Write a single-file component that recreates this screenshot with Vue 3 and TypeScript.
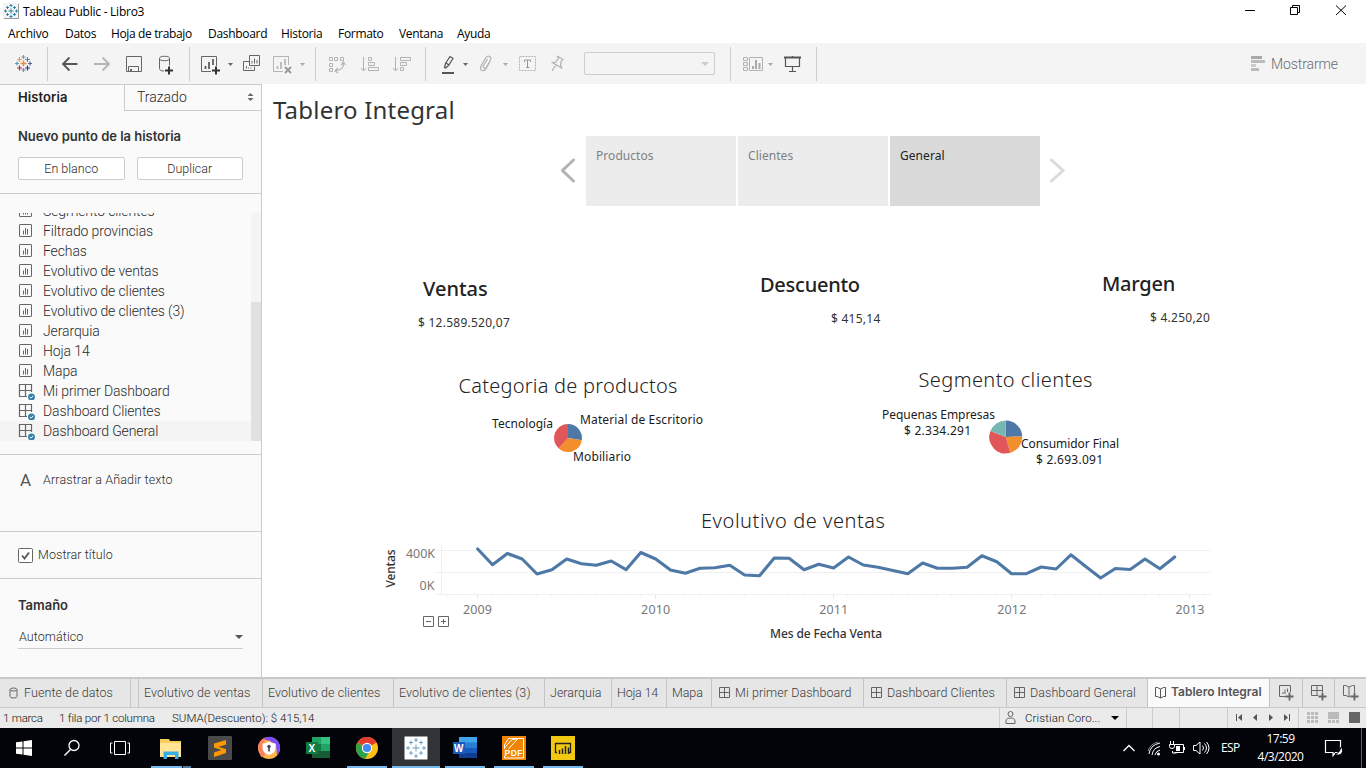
<script setup lang="ts">
interface Sheet { name: string; kind: 'sheet' | 'dashboard'; selected?: boolean }
interface Tab { name: string; cls: string; icon?: 'dash' | 'story' }
interface Slice { from: number; to: number; color: string }

const menus = ['Archivo', 'Datos', 'Hoja de trabajo', 'Dashboard', 'Historia', 'Formato', 'Ventana', 'Ayuda']

const sheets: Sheet[] = [
  { name: 'Segmento clientes', kind: 'sheet' },
  { name: 'Filtrado provincias', kind: 'sheet' },
  { name: 'Fechas', kind: 'sheet' },
  { name: 'Evolutivo de ventas', kind: 'sheet' },
  { name: 'Evolutivo de clientes', kind: 'sheet' },
  { name: 'Evolutivo de clientes (3)', kind: 'sheet' },
  { name: 'Jerarquia', kind: 'sheet' },
  { name: 'Hoja 14', kind: 'sheet' },
  { name: 'Mapa', kind: 'sheet' },
  { name: 'Mi primer Dashboard', kind: 'dashboard' },
  { name: 'Dashboard Clientes', kind: 'dashboard' },
  { name: 'Dashboard General', kind: 'dashboard', selected: true },
]

const storyPoints = ['Productos', 'Clientes', 'General']

const tabs: Tab[] = [
  { name: 'Evolutivo de ventas', cls: 'w1' },
  { name: 'Evolutivo de clientes', cls: 'w2' },
  { name: 'Evolutivo de clientes (3)', cls: 'w3' },
  { name: 'Jerarquia', cls: 'w4' },
  { name: 'Hoja 14', cls: 'w5' },
  { name: 'Mapa', cls: 'w6' },
  { name: 'Mi primer Dashboard', cls: 'w7', icon: 'dash' },
  { name: 'Dashboard Clientes', cls: 'w8', icon: 'dash' },
  { name: 'Dashboard General', cls: 'w9', icon: 'dash' },
  { name: 'Tablero Integral', cls: 'w10 active', icon: 'story' },
]

const monthX = (i: number) => 477.7 + i * 14.83
const monthly = [
  549, 564.7, 553.5, 559, 574, 569.7, 559, 563.7, 565.3, 561, 569.7, 552.5,
  559, 570, 573.3, 568.3, 567.7, 565.3, 575, 575.7, 558, 558.2, 569.7, 564.3,
  568, 557, 565, 567.3, 570.5, 573.7, 563, 568.3, 568.3, 567.3, 555.7, 561.7,
  573.7, 573.7, 567, 569, 554.8, 566.5, 578, 568.5, 569.5, 559, 568.7, 557,
]
const salesLine = monthly.map((y, i) => `${monthX(i).toFixed(1)},${y}`).join(' ')
const ticks = Array.from({ length: 52 }, (_, i) => ({ x: Math.round(monthX(i - 2)) - 0.5, major: (i - 2) % 12 === 0 }))
const years = [2009, 2010, 2011, 2012, 2013]

const categories: Slice[] = [
  { from: 0, to: 99, color: '#4e79a7' },
  { from: 99, to: 221, color: '#f28e2b' },
  { from: 221, to: 360, color: '#e15759' },
]
const segments: Slice[] = [
  { from: 0, to: 88, color: '#4e79a7' },
  { from: 88, to: 164, color: '#f28e2b' },
  { from: 164, to: 291, color: '#e15759' },
  { from: 291, to: 360, color: '#76b7b2' },
]
function slicePath(s: Slice, cx: number, cy: number, r: number): string {
  const at = (deg: number) => {
    const a = (deg * Math.PI) / 180
    return `${(cx + r * Math.sin(a)).toFixed(2)} ${(cy - r * Math.cos(a)).toFixed(2)}`
  }
  return `M${cx} ${cy}L${at(s.from)}A${r} ${r} 0 ${s.to - s.from > 180 ? 1 : 0} 1 ${at(s.to)}Z`
}
</script>

<template>
  <div class="window">
    <header class="titlebar">
      <svg class="applogo" width="16" height="16" viewBox="0 0 16 16">
        <rect width="16" height="16" fill="#f4f4f4" />
        <path d="M15.500 1v14.500H1" fill="none" stroke="#999" />
        <path d="M8 5.500v5M5.500 8h5M8 1v3M6.500 2.500h3M8 12v3M6.500 13.500h3M1 8h3M2.500 6.500v3M12 8h3M13.500 6.500v3M4.500 3v3M3 4.500h3M11.500 3v3M10 4.500h3M4.500 10v3M3 11.500h3M11.500 10v3M10 11.500h3" stroke="#2e86ab" fill="none" />
      </svg>
      <span class="apptitle">Tableau Public - Libro3</span>
      <svg class="controls" width="136" height="22" viewBox="1230 0 136 22" fill="none" stroke="#000">
        <path d="M1245 10.500h10" />
        <path d="M1290.500 7.500h7v7h-7zM1292.500 7.500v-2h7v7h-2" />
        <path d="M1336 5.500l10 9.500M1346 5.500l-10 9.500" />
      </svg>
    </header>

    <nav class="menubar">
      <span v-for="(m, i) in menus" :key="m" :class="'m' + i">{{ m }}</span>
    </nav>

    <div class="toolbar">
      <svg width="48" height="41" viewBox="0 43 48 41" fill="none" stroke-width="1.200">
        <path d="M23.500 60.500v6M20.500 63.500h6" stroke="#eb8b3c" stroke-width="1.500" />
        <path d="M23.500 55v4M21.500 57h4" stroke="#7199a6" />
        <path d="M23.500 68v4M21.500 70h4" stroke="#7b86b5" />
        <path d="M17 61.500v4M15 63.500h4" stroke="#5c9ca8" />
        <path d="M30 61.500v4M28 63.500h4" stroke="#5b6591" />
        <path d="M19.500 57v5M17 59.500h5" stroke="#e8a04d" />
        <path d="M27.500 57v5M25 59.500h5" stroke="#5b879b" />
        <path d="M19.500 65.500v5M17 68h5" stroke="#c72035" />
        <path d="M27.500 65.500v5M25 68h5" stroke="#1f4683" />
        <path d="M47.500 47v34" stroke="#ccc" stroke-width="1" />
      </svg>
      <svg width="142" height="41" viewBox="48 43 142 41" fill="none">
        <path d="M77.500 64H63M69.500 57.500L63 64l6.500 6.500" stroke="#555" stroke-width="1.800" />
        <path d="M94 64h15M102.500 57.500L109 64l-6.500 6.500" stroke="#b5b5b5" stroke-width="1.800" />
        <path d="M126.500 56.500h15v15h-15zM128.500 71v-4.500h10v4.500" stroke="#666" />
        <path d="M130 69h2v3h-2z" fill="#666" />
        <ellipse cx="164.500" cy="58.500" rx="5" ry="2.200" stroke="#666" />
        <path d="M159.500 58.500v10q0 2.500 4.500 2.500M169.500 58.500v7" stroke="#666" />
        <path d="M165 70.500h8M169 66.500v8" stroke="#333" stroke-width="2" />
        <path d="M189.500 47v34" stroke="#ccc" />
      </svg>
      <svg width="126" height="41" viewBox="190 43 126 41" fill="none">
        <path d="M211 71.500h-9.500v-15h15V66" stroke="#666" />
        <path d="M205.500 66v3M209 62v7M213 59v6" stroke="#555" stroke-width="1.700" />
        <path d="M212 70.500h8M216 66.500v8" stroke="#333" stroke-width="2" />
        <path d="M228 63h5l-2.500 3z" fill="#666" />
        <path d="M249.500 55.500h10v10h-10z" stroke="#666" />
        <path d="M249 61.500h-5.500v9h11v-4" stroke="#666" />
        <path d="M252 61v2.500M254.500 58.500v5M257 60v3.500M246.500 66v2.500M248.500 67.500v1M251 67.500v1" stroke="#666" />
        <path d="M283 71.500h-9.500v-15h15V65" stroke="#b5b5b5" />
        <path d="M277.500 66v3M281 62v7M285 59v6" stroke="#b5b5b5" stroke-width="1.700" />
        <path d="M285 67l6 6M291 67l-6 6" stroke="#999" stroke-width="1.800" />
        <path d="M300 63h5l-2.500 3z" fill="#aaa" />
        <path d="M315.500 47v34" stroke="#ccc" />
      </svg>
      <svg width="110" height="41" viewBox="316 43 110 41" fill="none" stroke="#b3b3b3">
        <path d="M329.500 57.500h3v3h-3zM334.500 57.500h3v3h-3zM340.500 57.500h3v3h-3zM329.500 63.500h3v3h-3zM329.500 68.500h3v3h-3z" />
        <path d="M343.500 62.500q1 7.500-8.500 8.500M341 65l2.500-3 2 3M338 68l-3 3 3 2" stroke-width="1.200" />
        <path d="M363.500 57v14M361 68l2.500 3 2.500-3M368.500 57.500h3v3h-3zM368.500 62.500h6v3h-6zM368.500 67.500h10v3h-10z" />
        <path d="M395.500 57v14M393 68l2.500 3 2.500-3M400.500 57.500h10v3h-10zM400.500 62.500h6v3h-6zM400.500 67.500h3v3h-3z" />
        <path d="M425.500 47v34" stroke="#ccc" />
      </svg>
      <svg width="150" height="41" viewBox="426 43 150 41" fill="none">
        <path d="M444.500 67.500l1-4 4.500-7 3 2-4.500 7-3 2.500zM446 63l3 2" stroke="#555" stroke-width="1.200" />
        <path d="M442 73h12" stroke="#555" stroke-width="2" />
        <path d="M463 63h5l-2.500 3z" fill="#666" />
        <path d="M487.500 59l-4 6.500q-1 2 .5 2.500t2.500-1l4-7q1-2.500-1-3.500t-3.500 1l-5 8.500q-1.500 3.500 1 4.500 2 .7 3.500-1l4-7" stroke="#b3b3b3" stroke-width="1.200" />
        <path d="M503 63h5l-2.500 3z" fill="#aaa" />
        <path d="M519.500 56.500h16v14h-16z" stroke="#b3b3b3" stroke-dasharray="2 1" />
        <path d="M524.500 62v-2h6v2M527.500 60v7M526 67.500h3.500" stroke="#999" />
        <path d="M557 56l6 3.500-1.500 1-1 4 1 3.500-9-5.500 3.500-.5 2.500-4zM555.500 65.500l-3.500 5.500" stroke="#b0b0b0" stroke-width="1.200" />
      </svg>
      <div class="fitbox"><i></i></div>
      <svg width="102" height="41" viewBox="715 43 102 41" fill="none">
        <path d="M730.500 47v34M816.500 47v34" stroke="#ccc" />
        <path d="M743.500 57.500h4v3h-4zM743.500 62.500h4v3h-4zM743.500 67.500h4v3h-4zM749.500 57.500h13v13h-13z" stroke="#b3b3b3" />
        <path d="M753 66v3M756 60v9M759.500 63v6" stroke="#aaa" stroke-width="2" />
        <path d="M768 63h5l-2.500 3z" fill="#aaa" />
        <path d="M784 57.500h17" stroke="#555" stroke-width="2" />
        <path d="M785.500 58v8.500h14V58M792.500 66.500v5M789 71.500h7M792.500 56v1" stroke="#555" stroke-width="1.200" />
      </svg>
      <div class="showme">
        <svg width="14" height="16" viewBox="0 0 14 16"><path d="M0 0h11v3H0z" fill="#a9a9a9" /><path d="M0 4h14v3H0zM0 12h8v3H0z" fill="#bbb" /><path d="M0 8h5v3H0z" fill="#ccc" /></svg>
        <span>Mostrarme</span>
      </div>
    </div>

    <div class="workspace">
      <aside class="sidebar">
        <div class="panetabs">
          <b>Historia</b>
          <div class="layouttab"><span>Trazado</span>
            <svg width="7" height="8" viewBox="0 0 7 8"><path d="M.5 3h6l-3-3zM.5 5h6l-3 3z" fill="#666" /></svg>
          </div>
        </div>
        <section class="newpoint">
          <h4>Nuevo punto de la historia</h4>
          <div class="buttons"><button>En blanco</button><button>Duplicar</button></div>
        </section>
        <section class="sheetbox">
          <div class="clip">
            <ul>
              <li v-for="s in sheets" :key="s.name" :class="{ selected: s.selected }">
                <svg width="18" height="18" viewBox="0 0 18 18" fill="none" stroke="#666">
                  <template v-if="s.kind === 'sheet'">
                    <rect x="1.500" y="2.500" width="12" height="12" rx=".5" />
                    <path d="M5.500 8.500v4M7.500 6v6.500M9.500 7v5.500" />
                  </template>
                  <template v-else>
                    <path d="M9 14.500H1.500v-12h12V10M7.500 2.500v12M1.500 8.500h12" stroke-width="1.200" />
                    <circle cx="13.500" cy="15" r="3.500" fill="#3581a8" stroke="none" />
                    <path d="M11.800 15l1.200 1.200 2.200-2.400" stroke="#fff" />
                  </template>
                </svg>
                <span>{{ s.name }}</span>
              </li>
            </ul>
            <div class="scroll"><div class="thumb"></div></div>
          </div>
        </section>
        <section class="addtext"><i>A</i><span>Arrastrar a Añadir texto</span></section>
        <section class="showtitle">
          <svg width="15" height="15" viewBox="0 0 15 15" fill="none"><rect x=".5" y=".5" width="14" height="14" rx="1" fill="#fff" stroke="#666" /><path d="M4 7.500l2.500 3L11 4.500" stroke="#555" stroke-width="1.800" /></svg>
          <span>Mostrar título</span>
        </section>
        <section class="size">
          <h4>Tamaño</h4>
          <div class="select"><span>Automático</span><i></i></div>
        </section>
      </aside>

      <main class="canvas">
        <h1>Tablero Integral</h1>
        <div class="story">
          <svg width="25" height="70" viewBox="561 136 25 70"><path d="M573.500 160l-11 10.500 11 10.500" fill="none" stroke="#b4b4b4" stroke-width="3" stroke-linecap="round" /></svg>
          <div v-for="(p, i) in storyPoints" :key="p" class="point" :class="{ current: i === 2 }">{{ p }}</div>
          <svg width="25" height="70" viewBox="1040 136 25 70"><path d="M1051.500 160l11.500 10.500-11.500 10.500" fill="none" stroke="#dadada" stroke-width="3" stroke-linecap="round" /></svg>
        </div>

        <div class="kpis">
          <div class="kpi k1"><h2>Ventas</h2><p>$ 12.589.520,07</p></div>
          <div class="kpi k2"><h2>Descuento</h2><p>$ 415,14</p></div>
          <div class="kpi k3"><h2>Margen</h2><p>$ 4.250,20</p></div>
        </div>

        <div class="pies">
          <svg width="470" height="130" viewBox="380 360 470 130">
            <text class="vt" x="458.500" y="393" textLength="219">Categoria de productos</text>
            <path v-for="s in categories" :key="s.from" :d="slicePath(s, 568, 438, 14)" :fill="s.color" />
            <text x="492" y="428" textLength="61">Tecnología</text>
            <text x="580" y="424" textLength="123">Material de Escritorio</text>
            <text x="573" y="461" textLength="58">Mobiliario</text>
          </svg>
          <svg width="370" height="130" viewBox="850 360 370 130">
            <text class="vt" x="918.500" y="387" textLength="174">Segmento clientes</text>
            <path v-for="s in segments" :key="s.from" :d="slicePath(s, 1005.8, 437, 16.5)" :fill="s.color" />
            <text x="882" y="419" textLength="113">Pequenas Empresas</text>
            <text x="904" y="435" textLength="67">$ 2.334.291</text>
            <text x="1021" y="448" textLength="98">Consumidor Final</text>
            <text x="1036" y="464" textLength="67">$ 2.693.091</text>
          </svg>
        </div>

        <svg class="trend" width="840" height="150" viewBox="380 500 840 150">
          <text class="vt" x="701" y="528" textLength="184">Evolutivo de ventas</text>
          <path d="M436 550.500h775M436 572.500h775M436 594.500h775M441.500 545v50" stroke="#f0f0f0" fill="none" />
          <path v-for="t in ticks" :key="t.x" :d="`M${t.x} 595v${t.major ? 4 : 1}`" stroke="#e8e8e8" />
          <polyline :points="salesLine" fill="none" stroke="#4e79a7" stroke-width="3.100" stroke-linejoin="round" stroke-linecap="round" />
          <g class="axis">
            <text x="406" y="558" textLength="29">400K</text>
            <text x="419.500" y="590" textLength="15">0K</text>
            <text v-for="(y, i) in years" :key="y" :x="463 + i * 178.1" y="614" textLength="29">{{ y }}</text>
          </g>
          <text class="at" transform="translate(395 587.500) rotate(-90)" textLength="38">Ventas</text>
          <text class="at" x="770" y="638" textLength="112">Mes de Fecha Venta</text>
          <path d="M423.500 616.500h10v10h-10zM438.500 616.500h10v10h-10zM426 621.500h5M441 621.500h5M443.500 619v5" fill="none" stroke="#666" />
        </svg>
      </main>
    </div>

    <div class="tabs">
      <div class="tab source">
        <svg width="10" height="13" viewBox="0 0 10 13" fill="none" stroke="#666"><ellipse cx="4.500" cy="2.500" rx="3.500" ry="1.500" /><path d="M1 2.500v7q0 1.500 3.500 1.500t3.500-1.500v-7" /></svg>
        <span>Fuente de datos</span>
      </div>
      <div class="tab gap"></div>
      <div v-for="t in tabs" :key="t.name" class="tab" :class="t.cls">
        <svg v-if="t.icon === 'dash'" width="12" height="13" viewBox="0 0 12 13" fill="none" stroke="#666"><path d="M.5 .5h10v10H.5zM5.500 .5v10M.5 5.500h10" /></svg>
        <svg v-if="t.icon === 'story'" width="12" height="15" viewBox="0 0 12 15" fill="none" stroke="#555"><path d="M.5 1.500h2L5.500 3l3-1.500h2v9h-2l-3 1.500-3-1.500h-2zM5.500 3v9" /></svg>
        <span>{{ t.name }}</span>
      </div>
      <div class="tab new n1"><svg width="18" height="18" viewBox="0 0 18 18" fill="none" stroke="#666"><path d="M8 12.500H1.500v-11h11V8M5 8v2M7 5.500V10M9.500 4.500V8" /><path d="M7.500 12.500h8M11.500 8.500v8" stroke-width="1.800" /></svg></div>
      <div class="tab new n2"><svg width="18" height="18" viewBox="0 0 18 18" fill="none" stroke="#666"><path d="M8 11.500H1.500v-10h11V8M7 1.500v10M1.500 6.500h11" /><path d="M8.500 12.500h8M12.500 8.500v8" stroke-width="1.800" /></svg></div>
      <div class="tab new n3"><svg width="18" height="18" viewBox="0 0 18 18" fill="none" stroke="#666"><path d="M8.500 12l-1.500 1-3-1.500H1.500v-10h2L7 3l3.500-1.500h2V8M7 3v10" /><path d="M8.500 12.500h8M12.500 8.500v8" stroke-width="1.800" /></svg></div>
    </div>

    <div class="status">
      <span class="s1">1 marca</span><span class="s2">1 fila por 1 columna</span><span class="s3">SUMA(Descuento): $ 415,14</span>
      <div class="user">
        <svg width="11" height="14" viewBox="0 0 11 14" fill="none" stroke="#666"><circle cx="5.500" cy="3" r="2.500" /><path d="M1 12.500V10q0-3 4.500-3t4.500 3v2.500z" /></svg>
        <span>Cristian Coro...</span>
        <i></i>
      </div>
      <div class="cell c1"></div><div class="cell c2"></div><div class="cell c3"></div>
      <svg width="139" height="20" viewBox="1227 708 139 20">
        <path d="M1227.500 708v20M1298.500 708v20" stroke="#ccc" />
        <path d="M1236 714h1v7h-1zM1242 714v7l-4-3.500zM1257 714v7l-4-3.500zM1269 714v7l4-3.500zM1284 714v7l4-3.500zM1289 714h1v7h-1z" fill="#555" />
        <path d="M1307 712h3v3h-3zM1311 712h3v3h-3zM1315 712h3v3h-3zM1307 716h3v3h-3zM1311 716h3v3h-3zM1315 716h3v3h-3zM1307 720h3v3h-3zM1311 720h3v3h-3zM1315 720h3v3h-3zM1328 712h11v7h-11zM1328 720h3v3h-3zM1332 720h3v3h-3zM1336 720h3v3h-3z" fill="#bbb" />
        <path d="M1349 712h11v11h-11z" fill="#666" />
      </svg>
    </div>

    <footer class="taskbar">
      <svg width="147" height="40" viewBox="0 728 147 40" fill="none" stroke="#fff">
        <path d="M16 742.300l6.500-.9v6.100H16zM23.500 741.200l8.500-1.200v7.500h-8.500zM16 748.500h6.500v6.100l-6.500-.9zM23.500 748.500H32v7.500l-8.500-1.200z" fill="#fff" stroke="none" />
        <circle cx="74" cy="745.500" r="5" stroke-width="1.300" /><path d="M70.500 749.500l-6 6" stroke-width="1.400" />
        <path d="M114.500 741.500h11v13h-11zM112.500 743h-2v10h2M127.500 743h2v10h-2" />
      </svg>
      <svg width="49" height="40" viewBox="147 728 49 40">
        <path d="M160 739h9l1 2h11v16h-21z" fill="#f5cf5c" /><path d="M160 743h21v14h-21z" fill="#ffe594" /><path d="M163.500 759v-7.500h15v7.500H175v-4h-8v4z" fill="#36aee6" />
        <path d="M151 766h31v2h-31z" fill="#76b9ed" /><path d="M183 766h8v2h-8z" fill="#4f7ba0" />
      </svg>
      <svg width="49" height="40" viewBox="196 728 49 40">
        <rect x="208" y="736" width="24" height="24" rx="1" fill="#4a4a4a" />
        <path d="M214 743.500l12-3.500v4.500l-7.500 2.500 7.500 2v4l-12 4V752.500l7.500-2.500-7.500-2.500z" fill="#ff9800" />
      </svg>
      <svg width="49" height="40" viewBox="245 728 49 40">
        <circle cx="269" cy="748" r="11" fill="#ffb547" /><path d="M262 739.500a11 11 0 0 1 18 8.500 11 11 0 0 1-3 7.500l-1-11-7-4z" fill="#7b4dff" /><path d="M258 748a11 11 0 0 1 7-10l-1 8 1 10-4 1z" fill="#ff7f5c" />
        <path d="M262.500 743.500q4 0 6.500-2 2.500 2 6.500 2v4.500q0 5-6.500 7-6.500-2-6.500-7z" fill="#fff" /><circle cx="269" cy="746.500" r="1.700" fill="#44405e" /><path d="M268.200 747h1.600v4.500h-1.600z" fill="#44405e" />
      </svg>
      <svg width="49" height="40" viewBox="294 728 49 40">
        <path d="M312 737h18v21h-18z" fill="#21a366" /><path d="M321 737h9v7h-9z" fill="#33c481" /><path d="M312 744h9v7h-9z" fill="#107c41" /><path d="M312 751h18v7h-18z" fill="#185c37" />
        <path d="M306 742h12v12h-12z" fill="#107c41" /><text class="tile" x="308.500" y="752">X</text>
      </svg>
      <svg width="49" height="40" viewBox="343 728 49 40">
        <circle cx="367" cy="748" r="11" fill="#fbc116" /><path d="M367 748l-9.500-5.500a11 11 0 0 1 19 0z" fill="#e33b2e" /><path d="M357.500 742.500a11 11 0 0 0 7.500 16.300l5-8z" fill="#2ba24c" />
        <circle cx="367" cy="748" r="5.200" fill="#fff" /><circle cx="367" cy="748" r="4.100" fill="#4688f1" />
        <path d="M347 766h40v2h-40z" fill="#76b9ed" />
      </svg>
      <svg width="49" height="40" viewBox="392 728 49 40">
        <path d="M392 728h48v40h-48z" fill="#333438" /><path d="M404.500 736.500h23v23h-23z" fill="#fff" />
        <path d="M416 744.500v7M412.500 748h7M416 738v4M414 740h4M416 754v4M414 756h4M408 746v4M406 748h4M424 746v4M422 748h4M411 740.500v4M409 742.500h4M421 740.500v4M419 742.500h4M411 751v4M409 753h4M421 751v4M419 753h4" stroke="#6f9fc4" fill="none" />
        <path d="M392 766h48v2h-48z" fill="#76b9ed" />
      </svg>
      <svg width="49" height="40" viewBox="441 728 49 40">
        <path d="M459 737h18v21h-18z" fill="#2b7cd3" /><path d="M459 737h18v5.500h-18z" fill="#41a5ee" /><path d="M459 748h18v5h-18z" fill="#185abd" /><path d="M459 753h18v5h-18z" fill="#103f91" />
        <path d="M453 742h12v12h-12z" fill="#185abd" /><text class="tile" x="454" y="752">W</text>
        <path d="M445 766h40v2h-40z" fill="#76b9ed" />
      </svg>
      <svg width="49" height="40" viewBox="490 728 49 40">
        <path d="M502 736h24v24h-24z" fill="#f08300" /><path d="M504.500 758v-13l4-6.500h15V758zM504.500 748l7-8 7-1.500M508.500 749l9-10" fill="none" stroke="#fff" />
        <path d="M504 749h19v7h-19z" fill="#f08300" /><text class="tile pdf" x="504.500" y="756" textLength="18">PDF</text>
        <path d="M494 766h40v2h-40z" fill="#76b9ed" />
      </svg>
      <svg width="49" height="40" viewBox="539 728 49 40">
        <path d="M551 736h24v24h-24z" fill="#f2c811" /><path d="M557 752.500h-1.500v-9h15v9H569" fill="none" stroke="#222" stroke-width="1.300" />
        <path d="M559.500 750v4M562.500 748.500v5.500M565.500 746v8M568.500 747.500v6.500" stroke="#222" stroke-width="1.500" />
        <path d="M543 766h40v2h-40z" fill="#76b9ed" />
      </svg>
      <svg class="tray" width="98" height="40" viewBox="1118 728 98 40" fill="none" stroke="#fff">
        <path d="M1123.500 751l5.500-5.500 5.500 5.500" stroke-width="1.300" />
        <path d="M1149 754q1-9 11-11M1152 755q1-7 8-8.500M1155 755q1-4 5-5" /><path d="M1148 751q2-7 10-9" stroke="#888" /><circle cx="1158.500" cy="754" r="1.500" fill="#fff" stroke="none" />
        <path d="M1174.500 744.500h9v8h-9M1184.500 747v3M1172.500 751v2h4M1170.500 741v3M1173.500 741v3M1169.500 744.500h5v2q0 2-2.500 2t-2.500-2z" /><path d="M1176 746h4v5h-4z" fill="#fff" stroke="none" />
        <path d="M1193.500 745.500h2.500l4-3.500v12l-4-3.500h-2.500zM1202.500 745.500q2 2.500 0 5M1204.500 743.500q4 4.500 0 9M1206.500 742q5 6 0 12" />
      </svg>
      <span class="lang">ESP</span>
      <div class="clock"><span>17:59</span><span>4/3/2020</span></div>
      <svg width="52" height="40" viewBox="1314 728 52 40" fill="none" stroke="#fff">
        <path d="M1325.500 740.500h15v12h-5l-2.500 3v-3h-7.500z" stroke-width="1.200" /><path d="M1341 747a4.500 4.500 0 1 1-6 7q5-1 6-7z" fill="#fff" stroke="#02040a" />
        <path d="M1361.500 728v40" stroke="#5b5d62" />
      </svg>
    </footer>
  </div>
</template>

<style>
body { margin: 0; overflow: hidden; background: #fff; }
</style>

<style scoped>
.window { width: 1366px; height: 768px; display: flex; flex-direction: column; background: #fff; color: #2a2a2a; font: 300 13px/16px Roboto, "Liberation Sans", sans-serif; overflow: hidden; }
.window * { box-sizing: border-box; }
svg { display: block; flex: none; }
span, h1, h2, h4, p, b { white-space: nowrap; }
h1, h2, h4, p, ul { margin: 0; padding: 0; }

.titlebar { height: 22px; flex: none; display: flex; align-items: center; color: #000; font: 12px/16px "Open Sans", "Noto Sans", sans-serif; }
.applogo { margin: 0 4px 0 3px; }
.apptitle { letter-spacing: -.25px; padding-top: 2px; }
.controls { margin-left: auto; }

.menubar { height: 21px; flex: none; display: flex; align-items: center; padding: 2px 0 0 8px; color: #000; font: 12px/16px "Open Sans", "Noto Sans", sans-serif; letter-spacing: -.3px; }
.m0 { width: 57px; letter-spacing: -.2px; } .m1 { width: 46px; } .m2 { width: 97px; letter-spacing: -.36px; } .m3 { width: 73px; } .m4 { width: 57px; } .m5 { width: 61px; } .m6 { width: 58px; }

.toolbar { height: 41px; flex: none; display: flex; align-items: center; background: #f4f4f4; }
.fitbox { width: 131px; height: 23px; margin: 0 0 0 8px; border: 1px solid #ccc; border-radius: 2px; display: flex; align-items: center; justify-content: flex-end; padding-right: 5px; }
.fitbox i { border: 4px solid transparent; border-top-color: #ccc; border-bottom: 0; }
.showme { margin-left: auto; margin-right: 28px; display: flex; align-items: center; gap: 6px; color: #6c6c6c; font-size: 14px; letter-spacing: -.1px; }

.workspace { height: 593px; flex: none; display: flex; }
.sidebar { width: 262px; flex: none; background: #fafafa; border-right: 1px solid #ccc; border-top: 1px solid #ccc; display: flex; flex-direction: column; }
.panetabs { height: 26px; flex: none; display: flex; }
.panetabs b { width: 124px; padding: 4px 0 0 18px; color: #222; font: 600 13px/17px Inter, sans-serif; letter-spacing: .1px; }
.layouttab { flex: 1; border-left: 1px solid #ccc; border-bottom: 1px solid #ccc; display: flex; align-items: center; justify-content: space-between; padding: 0 7px 1px 12px; font-size: 14px; }
.newpoint { height: 83px; flex: none; border-bottom: 1px solid #ccc; padding: 17px 18px 0; }
h4 { color: #333; font: 600 13px/16px Inter, sans-serif; letter-spacing: -.03px; }
.buttons { display: flex; gap: 12px; margin-top: 13px; }
button { width: 107px; height: 23px; padding: 0; background: #fff; border: 1px solid #ccc; border-radius: 2px; color: #2a2a2a; font: 300 12.500px/19px Roboto, sans-serif; }
.sheetbox { height: 261px; flex: none; border-bottom: 1px solid #ccc; padding-top: 19px; }
.clip { height: 228px; overflow: hidden; display: flex; }
ul { width: 251px; margin-top: -12px; list-style: none; }
li { height: 20px; display: flex; align-items: center; padding-left: 18px; gap: 7px; font-size: 14px; letter-spacing: -.12px; }
li.selected { background: #f4f4f4; }
.scroll { width: 10px; background: #f4f4f4; padding-top: 89px; }
.thumb { height: 139px; background: #e1e1e1; }
.addtext { height: 77px; flex: none; border-bottom: 1px solid #ccc; padding: 17px 0 0 20px; display: flex; align-items: flex-start; font-size: 12.500px; letter-spacing: .13px; }
.addtext i { width: 23px; font: 400 17px/17px Roboto, sans-serif; color: #555; }
.showtitle { height: 47px; flex: none; border-bottom: 1px solid #ccc; padding-left: 18px; display: flex; align-items: center; gap: 5px; font-size: 12.500px; letter-spacing: .08px; }
.size { padding: 18px 18px 0; }
.select { width: 225px; height: 25px; margin-top: 11px; border-bottom: 1px solid #ccc; padding: 1px 0 0 1px; display: flex; align-items: center; justify-content: space-between; font-size: 12.500px; letter-spacing: .08px; }
.select i, .user i { border: 4px solid transparent; border-top-color: #555; border-bottom: 0; }

.canvas { width: 1104px; font-family: "Noto Sans", "Open Sans", sans-serif; }
h1 { height: 52px; padding: 9px 0 0 11px; color: #333; font: 400 24px/34px "Noto Sans", sans-serif; letter-spacing: .2px; }
.story { display: flex; padding-left: 299px; height: 70px; }
.point { width: 150px; height: 70px; margin-right: 2px; padding: 11px 10px; background: #ececec; color: #808080; font: 12px/18px "Noto Sans", sans-serif; letter-spacing: .05px; }
.point.current { margin-right: 0; background: #dadada; color: #222; }
.kpis { height: 154px; display: grid; grid-template-columns: 400px 340px 1fr; }
.kpi h2 { color: #222; font: 500 20px/28px "Noto Sans", sans-serif; letter-spacing: -.25px; }
.kpi p { color: #333; font: 12px/18px "Noto Sans", sans-serif; margin-top: 11px; letter-spacing: .25px; }
.k1 { padding: 69px 0 0 156px; } .k1 h2 { padding-left: 5px; letter-spacing: 0; }
.k2 { padding: 65px 0 0 98px; } .k2 p { padding-left: 71px; }
.k3 { padding: 64px 0 0 100px; } .k3 p { padding-left: 48px; }
.pies { display: flex; padding-left: 118px; height: 130px; }
.trend { margin: 10px 0 0 118px; }
.canvas text { font: 12px "Noto Sans", sans-serif; fill: #1b1b1b; }
.canvas text.vt { font-size: 20px; font-weight: 300; fill: #222; }
.canvas .axis text { font-size: 12.500px; fill: #787878; }
.canvas text.at { fill: #333; font-weight: 500; }

.tabs { height: 31px; flex: none; display: flex; border-top: 2px solid #c8c8c8; border-bottom: 1px solid #c8c8c8; background: #e6e6e6; }
.tab { height: 28px; flex: none; display: flex; align-items: center; border-right: 1px solid #c4c4c4; padding: 0 0 0 5px; gap: 4px; color: #3c3c3c; font-size: 12.500px; letter-spacing: .07px; }
.source { width: 131px; padding-left: 9px; gap: 5px; } .gap { width: 8px; }
.w1 { width: 124px; } .w2 { width: 131px; } .w3 { width: 151px; letter-spacing: .1px; } .w4 { width: 67px; letter-spacing: 0; } .w5 { width: 55px; letter-spacing: -.2px; } .w6 { width: 45px; letter-spacing: -.1px; }
.w7 { width: 152px; padding-left: 7px; } .w8 { width: 143px; padding-left: 7px; } .w9 { width: 141px; padding-left: 7px; }
.w10 { width: 122px; padding-left: 7px; } .n1 { width: 33px; } .n2 { width: 32px; } .n3 { width: 33px; border: 0; }
.new { padding-left: 8px; }
.n2, .n3 { padding-left: 7px; }
.active { background: #fafafa; color: #555; font: 600 12px/16px Inter, sans-serif; letter-spacing: 0; }
.active span { padding-bottom: 2px; }

.status { height: 20px; flex: none; display: flex; align-items: center; background: #ebebeb; color: #111; font-size: 11.500px; }
.s1 { width: 59px; padding-left: 3px; letter-spacing: -.25px; } .s2 { width: 113px; letter-spacing: -.2px; } .s3 { width: 827px; letter-spacing: .04px; }
.user { width: 128px; height: 20px; border-left: 1px solid #ccc; border-right: 1px solid #ccc; display: flex; align-items: center; padding-left: 5px; }
.user span { width: 87px; padding-left: 9px; letter-spacing: .1px; }
.user i { border-top-color: #000; margin-left: 8px; }
.cell { height: 20px; border-right: 1px solid #ccc; } .c1 { width: 26px; } .c2 { width: 27px; } .c3 { width: 47px; border: 0; }

.taskbar { height: 40px; flex: none; display: flex; align-items: center; background: #02040a; color: #fff; font: 12px/18px "Open Sans", "Noto Sans", sans-serif; }
.tray { margin-left: auto; }
.lang { width: 33px; padding-left: 5px; letter-spacing: -.6px; }
.clock { width: 65px; display: flex; flex-direction: column; align-items: center; padding: 0 2px 1px 0; letter-spacing: -.5px; }
.tile { font: 700 10px "Liberation Sans", sans-serif; fill: #fff; }
.pdf { font-size: 8.500px; }
</style>
